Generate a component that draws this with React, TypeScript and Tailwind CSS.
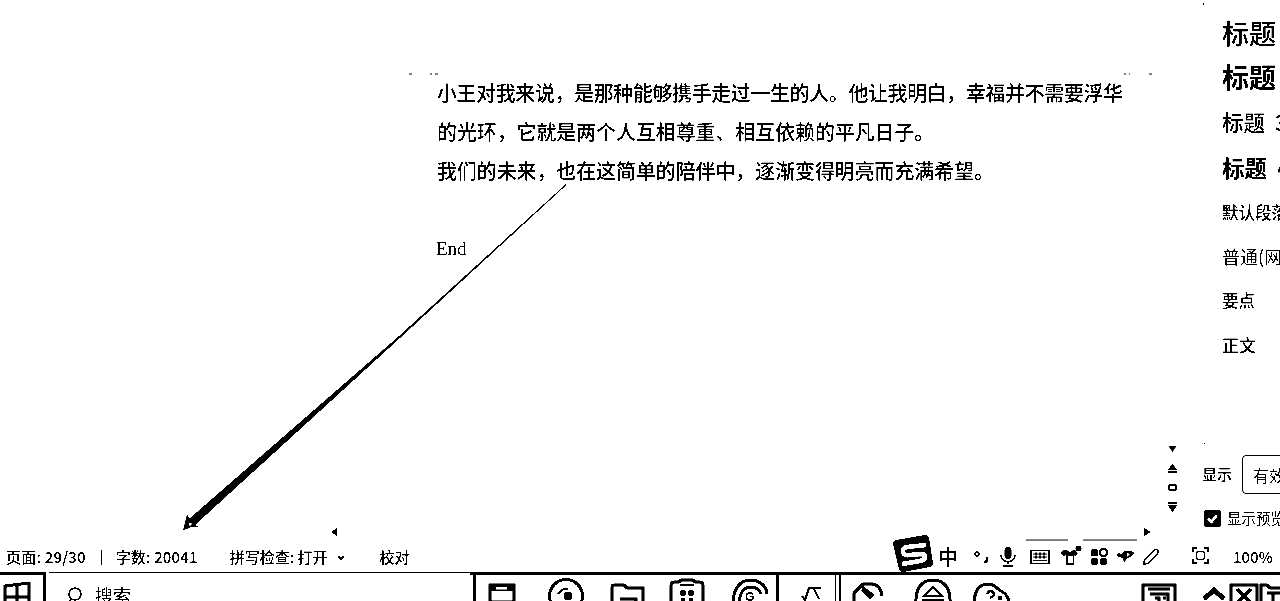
const cjk = "font-['Noto_Sans_CJK_SC','Liberation_Sans',sans-serif]";

function Arrow() {
  return (
    <svg className="absolute left-0 top-0 pointer-events-none" width="1280" height="601" viewBox="0 0 1280 601">
      <polygon points="566,184 566.6,184.8 400,338 195,525 189,519 399,336" fill="#000" />
      <polygon points="183,530.5 187,514.5 190,520 195,525 199,527 190,527.5" fill="#000" />
      <rect x="189" y="523" width="2.5" height="2.5" fill="#fff" />
      <polygon points="331,532 337,528 337,536" fill="#000" />
      <polygon points="1151,532 1144,528 1144,536" fill="#000" />
      <path d="M409 74h3M430 74h2M435 74h3M1124 74h2M1129 74h1M1149 74h3M1204 443l1 1M1203 5l1 -2" stroke="#000" strokeWidth="1" />
      <path d="M1026 540h42M1083 540h54" stroke="#000" strokeWidth="1" />
    </svg>
  );
}

function ScrollIcons() {
  return (
    <div className="flex flex-col items-center justify-end gap-[11px] w-[12px] mr-[22px] mb-[35px]">
      <svg width="9" height="8" viewBox="0 0 9 8"><polygon points="0.500,1 8.500,1 4.500,7" fill="#000" /></svg>
      <svg width="9" height="9" viewBox="0 0 9 9"><path d="M0 8h9M1 5.5 4.500 1 8 5.500z" fill="#000" stroke="#000" strokeWidth="1.4" /></svg>
      <svg width="9" height="7" viewBox="0 0 9 7"><rect x="1.200" y="1.200" width="6.600" height="4.600" rx="1" fill="none" stroke="#000" strokeWidth="2.200" /></svg>
      <svg width="9" height="10" viewBox="0 0 9 10"><path d="M0 1h9M1 3.500h7L4.500 9z" fill="#000" stroke="#000" strokeWidth="1.400" /></svg>
    </div>
  );
}

function Doc() {
  return (
    <div className="flex-1 flex min-w-0">
      <div className="flex-1 pl-[437px] pt-[73px] min-w-0">
        <div className={`text-[19.9px] leading-[39px] text-black whitespace-nowrap font-medium ${cjk}`}>
          <p className="tracking-[-0.3px]">小王对我来说，是那种能够携手走过一生的人。他让我明白，幸福并不需要浮华</p>
          <p>的光环，它就是两个人互相尊重、相互依赖的平凡日子。</p>
          <p>我们的未来，也在这简单的陪伴中，逐渐变得明亮而充满希望。</p>
          <p className="h-[39px]"></p>
          <p className="font-['Liberation_Serif',serif] text-[19px] font-normal -ml-px">End</p>
        </div>
      </div>
      <ScrollIcons />
    </div>
  );
}

function StyleRow({ label, size, h, weight }: { label: string; size: string; h: string; weight: string }) {
  return (
    <div className={`flex items-center whitespace-nowrap text-black ${h} ${size} ${weight}`}>
      {label}
    </div>
  );
}

function Sidebar() {
  return (
    <div className={`w-[80px] overflow-hidden flex flex-col pl-[22px] pt-[12px] ${cjk}`}>
      <StyleRow h="h-[43px]" label="标题" size="text-[27px]" weight="font-medium" />
      <StyleRow h="h-[45px]" label="标题" size="text-[27px]" weight="font-bold" />
      <StyleRow h="h-[45px]" label={"标题\u00a0\u00a03"} size="text-[21.5px]" weight="font-medium" />
      <StyleRow h="h-[45px]" label={"标题\u00a0\u00a04"} size="text-[22.5px]" weight="font-bold" />
      <StyleRow h="h-[44px]" label="默认段落" size="text-[16.5px]" weight="font-medium" />
      <StyleRow h="h-[44.5px]" label="普通(网站)" size="text-[18px]" weight="font-normal" />
      <StyleRow h="h-[44px]" label="要点" size="text-[16.5px]" weight="font-medium" />
      <StyleRow h="h-[44px]" label="正文" size="text-[17px]" weight="font-medium" />
      <div className="mt-[88.5px] -ml-[20px] flex items-center gap-[10px] whitespace-nowrap">
        <span className="text-[15px] leading-none font-medium -mt-[3px]">显示</span>
        <div className="w-[60px] h-[39px] border border-black rounded-l-[4px] flex items-center pl-[10px] text-[16px]">有效样式</div>
      </div>
      <div className="mt-[16px] -ml-[18px] flex items-center gap-[6px] whitespace-nowrap">
        <span className="w-[17px] h-[17px] rounded-[3px] bg-black flex items-center justify-center shrink-0">
          <svg width="13" height="13" viewBox="0 0 12 12"><path d="M2 6l3 3 5-6" fill="none" stroke="#fff" strokeWidth="2.400" /></svg>
        </span>
        <span className="text-[14.5px] leading-none">显示预览</span>
      </div>
    </div>
  );
}

function Sogou() {
  return (
    <svg className="absolute left-[892px] top-[-13px]" width="42" height="39" viewBox="0 0 42 39">
      <path d="M4 6 33 1q3 0 4 3l4 25q0 3-3 4L11 38q-3 0-4-3L1 10q0-3 3-4z" fill="#000" />
      <path d="M34 11 15 13q-5 1-4 5t6 3l12-1q4 0 4 3t-5 4l-18 3" fill="none" stroke="#fff" strokeWidth="4.500" />
    </svg>
  );
}

function Tray() {
  return (
    <div className="absolute left-[938px] top-[-3px] h-[25px] flex items-center">
      <span className="w-[20px] text-[20px] font-medium leading-none">中</span>
      <svg className="ml-[15px]" width="18" height="18" viewBox="0 0 18 18"><circle cx="4" cy="6" r="2" fill="none" stroke="#000" strokeWidth="1.600" /><path d="M14 9v3l-2 3" stroke="#000" strokeWidth="2.600" fill="none" /></svg>
      <svg className="ml-[8px]" width="18" height="22" viewBox="0 0 18 22"><rect x="5.500" y="1" width="7" height="12" rx="3.500" fill="#000" /><path d="M2 9c0 9 14 9 14 0M9 15v3M4 20h10" fill="none" stroke="#000" strokeWidth="1.600" /></svg>
      <svg className="ml-[13px]" width="20" height="16" viewBox="0 0 20 16"><rect x="1" y="1.500" width="18" height="13" fill="none" stroke="#000" strokeWidth="1.500" /><path d="M3 5h14M3 8h14M3 11.500h14M6 3v7M10 3v7M14 3v7" stroke="#000" strokeWidth="1" /></svg>
      <svg className="ml-[8px]" width="24" height="24" viewBox="0 0 24 24"><path d="M2 8l4-3h3q3 4 6 0h2l3 3-3 3-1-1v10H8V10l-2 1z" fill="#000" /><path d="M10 11h5v7h-5z" fill="#fff" /><circle cx="20.500" cy="3.500" r="3" fill="#000" /></svg>
      <svg className="ml-[8px]" width="18" height="18" viewBox="0 0 18 18"><rect x="1" y="1" width="7" height="7" rx="1.500" fill="#000" /><rect x="10" y="1" width="7" height="7" rx="3" fill="none" stroke="#000" strokeWidth="2" /><rect x="1" y="10" width="7" height="7" rx="3" fill="#000" /><rect x="10" y="10" width="7" height="7" rx="3" fill="#000" /></svg>
      <svg className="ml-[8px]" width="18" height="14" viewBox="0 0 18 14"><path d="M0 5q2-3 5-1 4-4 8-3 4 0 5 2-3 5-7 5l-3 5-1-5Q3 8 0 5z" fill="#000" /><path d="M11 3l3 1-3 3z" fill="#fff" /></svg>
      <svg className="ml-[8px]" width="18" height="18" viewBox="0 0 18 18"><path d="M1.500 16.500l1-5L12 2q2-1.500 3.500 0t0 3.500L6.500 15z" fill="none" stroke="#000" strokeWidth="1.500" /></svg>
    </div>
  );
}

function StatusBar() {
  return (
    <div className={`relative h-[25px] flex items-center text-[15px] font-medium text-black whitespace-nowrap pl-[6px] pb-[5px] ${cjk}`}>
      <span className="tracking-[0.2px]">页面: 29/30</span>
      <span className="w-px h-[15px] bg-black ml-[15px]"></span>
      <span className="ml-[14px] tracking-[0.15px]">字数: 20041</span>
      <span className="ml-[32px]">拼写检查: 打开</span>
      <svg className="ml-[8px] mt-[2px]" width="10" height="8" viewBox="0 0 10 8"><path d="M2 2l3 3 3-3" fill="none" stroke="#000" strokeWidth="2" /></svg>
      <span className="ml-[34px]">校对</span>
      <Sogou />
      <Tray />
      <svg className="absolute left-[1192px] top-0" width="17" height="17" viewBox="0 0 17 17"><path d="M1 5V1h4M12 1h4v4M16 12v4h-4M5 16H1v-4" fill="none" stroke="#000" strokeWidth="1.500" /><rect x="4.500" y="4.500" width="8" height="8" rx="2" fill="none" stroke="#000" strokeWidth="1.600" /></svg>
      <span className="absolute left-[1233px] top-0 h-[20px] flex items-center">100%</span>
    </div>
  );
}

const taskIcon = "fill-none stroke-black stroke-[3]";

function Taskbar() {
  return (
    <div className={`h-[29px] flex overflow-hidden ${cjk}`}>
      <div className="w-[46px] shrink-0 border-t-[3px] border-r-[3px] border-black pl-[3px] pt-[7px]">
        <svg width="28" height="24" viewBox="0 0 28 24"><path d="M2 4l24-3v23H2zM14 3v21M2 15h24" className={taskIcon} /></svg>
      </div>
      <div className="w-[421px] shrink-0 ml-[3px] border-t border-black flex items-start pl-[16px] pt-[10px] text-[18px] leading-[24px]">
        <svg className="mt-[4px]" width="18" height="24" viewBox="0 0 18 24"><circle cx="10" cy="7" r="6" className="fill-none stroke-black stroke-[1.600]" /><path d="M6 12l-4 6" className="fill-none stroke-black stroke-[1.600]" /></svg>
        <span className="ml-[12px]">搜索</span>
      </div>
      <div className="flex-1 min-w-0 border-t-[3px] border-black pl-[3px]">
        <div className="h-full border-l-[3px] border-black flex items-start pt-[3px] pl-[12px]">
          <svg className="mt-[5px] shrink-0" width="28" height="18" viewBox="0 0 28 18"><path d="M2 2h24v17H2z" className={taskIcon} /><rect x="2" y="1" width="24" height="7" fill="#000" /><rect x="8" y="4" width="11" height="2.500" fill="#fff" /></svg>
          <svg className="ml-[31px] shrink-0" width="38" height="23" viewBox="0 0 38 23"><circle cx="19" cy="18" r="16.500" className={taskIcon} /><path d="M11 16q4-6 10-5" className="fill-none stroke-black stroke-[2]" /><circle cx="21" cy="18" r="4.500" fill="#000" /></svg>
          <svg className="ml-[25px] mt-[5px] shrink-0" width="36" height="18" viewBox="0 0 36 18"><path d="M2 20V4q0-2 2-2h10l3 3h16v15M10 16h16v4" className={taskIcon} /></svg>
          <svg className="ml-[23px] shrink-0" width="36" height="23" viewBox="0 0 36 23"><path d="M2 26V7q0-3 3-3h5l2-2h12l2 2h5q3 0 3 3v19" className={taskIcon} /><path d="M11 7h14" className="fill-none stroke-black stroke-[1.500]" /><circle cx="14" cy="15" r="3" fill="#000" /><circle cx="22" cy="15" r="3" fill="#000" /><rect x="12" y="20" width="4" height="4" fill="#000" /><rect x="20" y="20" width="4" height="4" fill="#000" /></svg>
          <svg className="ml-[26px] shrink-0" width="38" height="23" viewBox="0 0 38 23"><path d="M2 26C2 10 10 2 19 2s17 6 17 14M8 26C8 15 13 9 20 9c6 0 9 4 10 7" className={taskIcon} /><text x="14" y="23" fontSize="12" fontWeight="700" fontFamily="Liberation Sans">G</text></svg>
          <div className="w-[3px] h-[30px] -mt-[3px] bg-black ml-[7px] shrink-0"></div>
          <svg className="ml-[21px] mt-[5px] shrink-0" width="24" height="18" viewBox="0 0 24 18"><path d="M2 13l3 4 4-12h12" className="fill-none stroke-black stroke-[2]" /><path d="M14 6l5 10" className="fill-none stroke-black stroke-[2]" /></svg>
          <div className="w-px h-[30px] -mt-[3px] bg-black ml-[11px] shrink-0"></div>
          <div className="w-[2px] h-[30px] -mt-[3px] bg-black ml-[3px] shrink-0"></div>
          <svg className="ml-[11px] mt-[4px] shrink-0" width="32" height="19" viewBox="0 0 32 19"><path d="M2 20V11L11 2h10q8 2 9 12" className={taskIcon} /><path d="M11 4l12 9-5 4L9 9z" fill="#000" /></svg>
          <svg className="ml-[30px] shrink-0" width="38" height="23" viewBox="0 0 38 23"><path d="M2 26C1 10 8 2 19 2s18 8 17 24" className={taskIcon} /><path d="M10 18l9-9 9 9zM8 22h22" className="fill-none stroke-black stroke-[2]" /></svg>
          <svg className="ml-[21px] mt-[4px] shrink-0" width="38" height="19" viewBox="0 0 38 19"><path d="M2 22C0 10 6 2 15 2c7 0 9 5 13 7s8 6 8 13" className={taskIcon} /><path d="M14 12q3-5 6-2t-3 6" className="fill-none stroke-black stroke-[2.500]" /><circle cx="27" cy="16" r="2.500" fill="#000" /></svg>
          <svg className="ml-[130px] mt-[5px] shrink-0" width="36" height="18" viewBox="0 0 36 18"><path d="M2 20V2h32v18M7 6h22M9 11h18v9M14 15h4v5M22 15h3" className={taskIcon} /></svg>
          <svg className="ml-[24px] mt-[9px] shrink-0" width="26" height="14" viewBox="0 0 26 14"><path d="M3 12L13 3l10 9" className="fill-none stroke-black stroke-[5]" /></svg>
          <svg className="ml-[2px] mt-[5px] shrink-0" width="30" height="18" viewBox="0 0 30 18"><path d="M2 20V2h26v18M8 6l14 14M22 6L8 20" className={taskIcon} /></svg>
          <svg className="mt-[5px] shrink-0" width="24" height="18" viewBox="0 0 24 18"><path d="M2 20V2h6l3 3h13M8 10h16M14 10v10" className={taskIcon} /></svg>
        </div>
      </div>
    </div>
  );
}

export default function App() {
  return (
    <div className={`relative w-[1280px] h-[601px] overflow-hidden bg-white text-black flex flex-col contrast-[20] ${cjk}`}>
      <div className="h-[547px] flex">
        <Doc />
        <Sidebar />
      </div>
      <StatusBar />
      <Taskbar />
      <Arrow />
    </div>
  );
}
